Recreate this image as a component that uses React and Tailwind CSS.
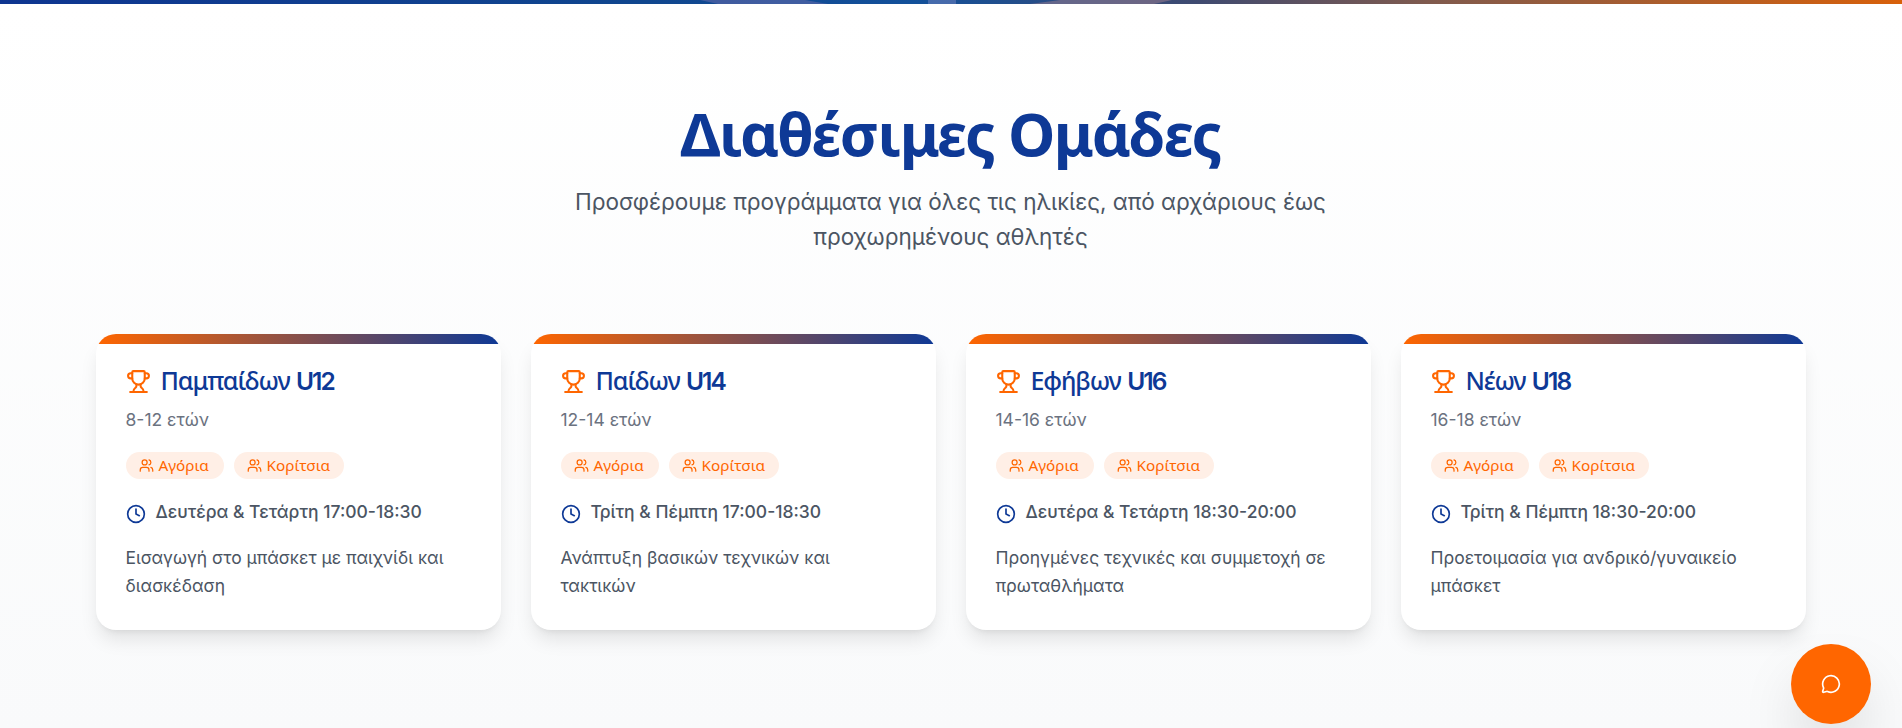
import React from "react";
import { Trophy, Users, Clock, MessageCircle } from "lucide-react";

const teams = [
  { name: "Παμπαίδων", level: "U12", age: "8-12 ετών", time: "Δευτέρα & Τετάρτη 17:00-18:30", text: "Εισαγωγή στο μπάσκετ με παιχνίδι και διασκέδαση" },
  { name: "Παίδων", level: "U14", age: "12-14 ετών", time: "Τρίτη & Πέμπτη 17:00-18:30", text: "Ανάπτυξη βασικών τεχνικών και τακτικών" },
  { name: "Εφήβων", level: "U16", age: "14-16 ετών", time: "Δευτέρα & Τετάρτη 18:30-20:00", text: "Προηγμένες τεχνικές και συμμετοχή σε πρωταθλήματα" },
  { name: "Νέων", level: "U18", age: "16-18 ετών", time: "Τρίτη & Πέμπτη 18:30-20:00", text: "Προετοιμασία για ανδρικό/γυναικείο μπάσκετ" },
];

function Pill({ width, children }) {
  return (
    <span className={`flex h-[27px] items-center gap-[5px] rounded-full bg-[#ffefe6] pl-[13px] font-['Noto_Sans',sans-serif] text-[15.3px] leading-5 text-[#ff6600] ${width}`}>
      <Users size={15} className="shrink-0" />
      <span className="pb-px whitespace-nowrap">{children}</span>
    </span>
  );
}

function TeamCard({ team }) {
  return (
    <article className="h-[296px] overflow-hidden rounded-[20px] bg-white shadow-[0_12.5px_18.75px_-3.75px_rgba(0,0,0,0.1),0_5px_7.5px_-5px_rgba(0,0,0,0.1)]">
      <div className="h-[10px] bg-linear-to-r/srgb from-[#ff6600] to-[#0e3996]" />
      <div className="px-[30px] pt-5">
        <h3 className="flex h-[35px] items-center gap-[10px] text-[25px] leading-[34px] text-[#0e3996]">
          <Trophy size={25} color="#ff6600" />
          <span className="pb-[2px] font-['Noto_Sans',sans-serif] font-medium tracking-[-1.1px]">
            {team.name} <span className="ml-px font-['Inter',sans-serif] text-[24.5px] font-semibold tracking-[-1.9px]">{team.level}</span>
          </span>
        </h3>
        <p className="mt-[7.5px] text-[17.5px] leading-[25px] text-[#6b7280]">{team.age}</p>
        <div className="mt-5 flex gap-[10px]">
          <Pill width="w-[98px]">Αγόρια</Pill>
          <Pill width="w-[110px]">Κορίτσια</Pill>
        </div>
        <div className="mt-5 flex items-start gap-[10px] text-[17.5px] leading-[25px] text-[#4b5563]">
          <Clock size={20} className="mt-[5px]" color="#0e3996" />
          <span className="font-medium">{team.time}</span>
        </div>
        <p className="mt-5 text-[17.5px] leading-[28.4px] text-[#4b5563]">{team.text}</p>
      </div>
    </article>
  );
}

export default function App() {
  return (
    <div className="relative h-[728px] overflow-hidden bg-white font-['Inter','Noto_Sans',sans-serif]">
      <div className="h-1 bg-[linear-gradient(to_right,#0e3590,#10468e_34%,#12509a_48%,#3f4a70_63%,#7f5a4e_75%,#d8600a)]">
        <svg className="block h-1 w-full" viewBox="0 0 1902 4" preserveAspectRatio="none">
          <path d="M700 0H805L828 4H718Z" fill="#8878b4" fillOpacity=".4" />
          <rect x="928" width="28" height="4" fill="#8f94cd" fillOpacity=".4" />
          <path d="M1060 0H1172L1154 4H1030Z" fill="#a08090" fillOpacity=".5" />
        </svg>
      </div>
      <section className="h-[724px] bg-linear-to-b/srgb from-white to-[#f9fafb] pt-[99px] pr-[96.5px] pl-[95.5px]">
        <div className="mx-auto w-[840px] text-center">
          <h2 className="font-['Noto_Sans',sans-serif] text-[60px] leading-[60px] font-bold tracking-[-1.7px] text-[#0e3996]">Διαθέσιμες Ομάδες</h2>
          <p className="mt-[21px] text-[22.5px] leading-[35px] text-[#4b5563]">
            Προσφέρουμε προγράμματα για όλες τις ηλικίες, από αρχάριους έως προχωρημένους αθλητές
          </p>
        </div>
        <div className="mt-20 grid grid-cols-4 gap-[30px]">
          {teams.map((t) => <TeamCard key={t.level} team={t} />)}
        </div>
      </section>
      <button className="absolute top-[644px] left-[1791px] flex size-20 items-center justify-center rounded-full bg-[#ff6600] text-white shadow-[0_31px_62px_-15px_rgba(0,0,0,0.25)]" aria-label="Chat">
        <MessageCircle size={20} />
      </button>
    </div>
  );
}
